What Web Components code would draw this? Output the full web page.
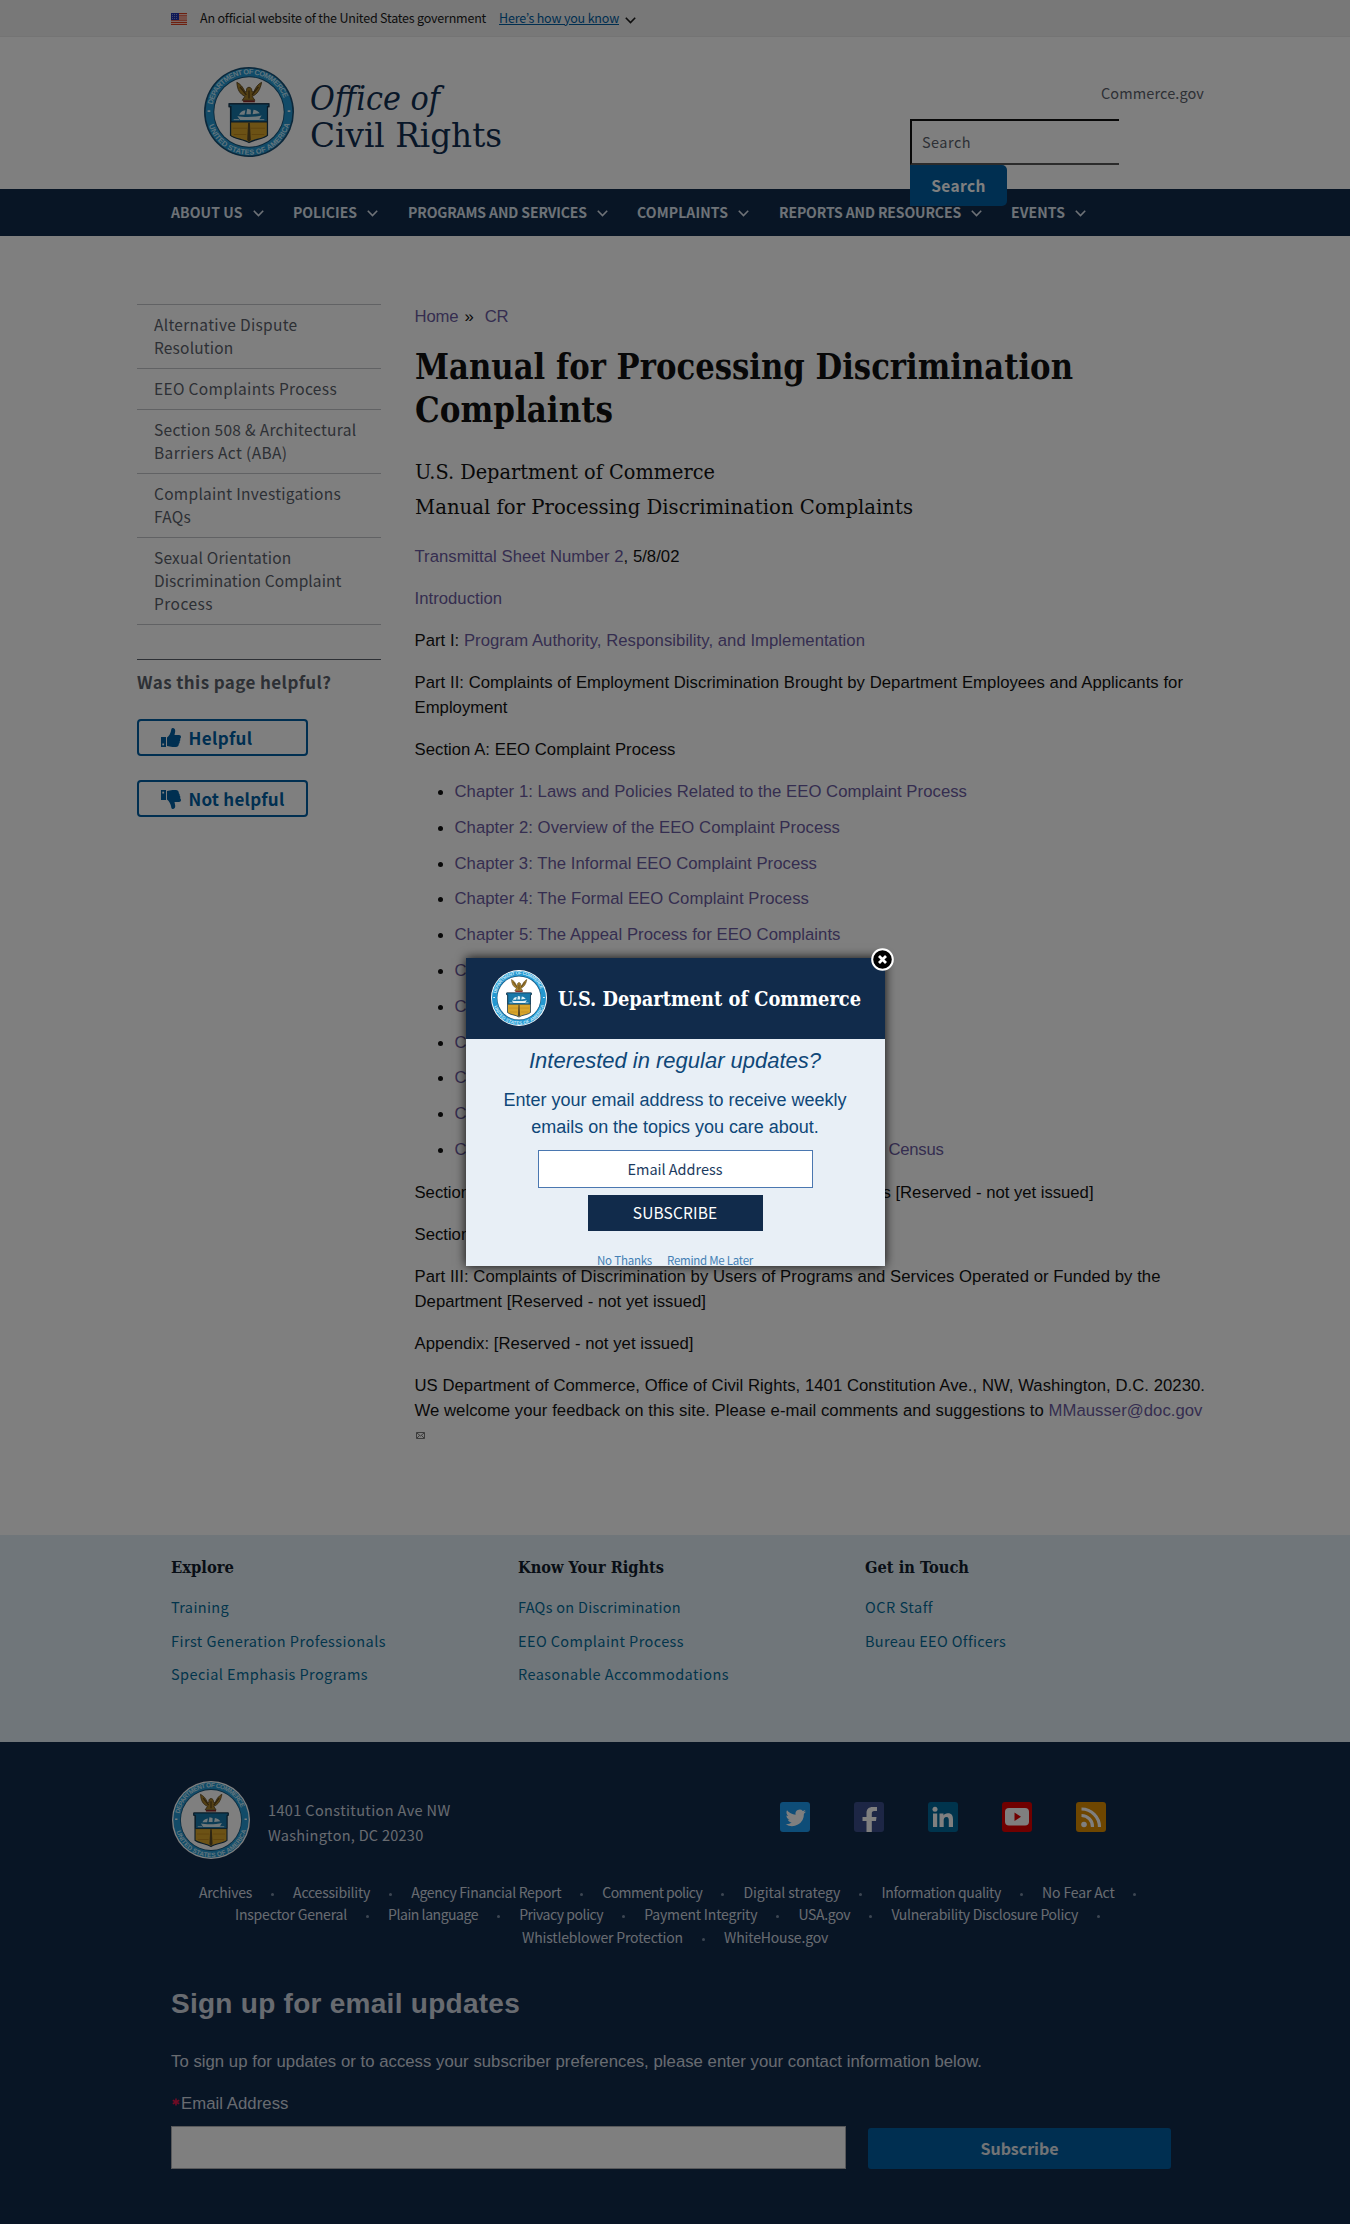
<!DOCTYPE html>
<html lang="en">
<head>
<meta charset="utf-8">
<title>Manual for Processing Discrimination Complaints</title>
<style>
html,body{margin:0;padding:0}
body{position:relative;width:1350px;height:2224px;overflow:hidden;background:#fff;color:#111;
--sans:"Noto Sans CJK JP","Noto Sans CJK SC",sans-serif;
--serif:"DejaVu Serif Condensed","DejaVu Serif",serif;
--arial:"Liberation Sans",Arial,sans-serif;
font-family:var(--arial);font-size:17px}
.cols{display:flex;height:1299px;box-sizing:border-box;padding:68px 0 0 137px}
</style>
</head>
<body>
<gov-banner></gov-banner>
<site-header></site-header>
<site-nav></site-nav>
<div class="cols">
<side-nav></side-nav>
<page-article></page-article>
</div>
<footer-columns></footer-columns>
<site-footer></site-footer>
<page-overlay><subscribe-popup></subscribe-popup></page-overlay>
<script>
function component(name, html){
  customElements.define(name, class extends HTMLElement{
    constructor(){ super(); this.attachShadow({mode:'open'}).innerHTML = html; }
  });
}
const t = (w, s, x='') => `<fit-text w="${w}" ${x}>${s}</fit-text>`;
const chevron = (c, w) => `<svg width="11" height="7" viewBox="0 0 11 7" fill="none" stroke="${c}" stroke-width="${w}"><path d="M.8 .8 5.5 5.5 10.2 .8"/></svg>`;

component('doc-seal', `<style>:host{display:block;flex:none}svg{display:block;width:100%;height:100%}text{font:bold 8.2px "Liberation Sans",sans-serif;fill:#c3e9fa}</style>
<svg viewBox="0 0 100 100">
<defs><path id="up" d="M9.2 53A41 41 0 1 1 90.8 53"/><path id="dn" d="M3.5 54A46.6 46.6 0 0 0 96.5 54"/></defs>
<circle cx="50" cy="50" r="50" fill="var(--rim,#174f74)"/><circle cx="50" cy="50" r="48.3" fill="#2497d0"/>
<circle cx="50" cy="50" r="39.6" fill="#145177"/><circle cx="50" cy="50" r="38.6" fill="#fff"/>
<text textLength="107"><textPath href="#up" startOffset="11">DEPARTMENT OF COMMERCE</textPath></text>
<text textLength="120"><textPath href="#dn" startOffset="11">UNITED STATES OF AMERICA</textPath></text>
<path d="M36.500 17c.5 8 3 13 9 15.500l-3 4.500h14l-3-4.500c5.500-2 9-7 10.500-15.500-4 2-7 6-8.500 10.500l-2.200 0c0-3-1-5-3.300-5s-3.300 2-2.500 5l-2 0c-2-5-5-8.500-9-10.500z" fill="#a8832b" stroke="#513b16" stroke-width=".9"/>
<path d="M40 22l7 9M60.500 22l-7 9M50 26v9" stroke="#5b4219" stroke-width="1.500"/><path d="M43.500 38.200h13" stroke="#8d2a26" stroke-width="2"/>
<path d="M28 41h44v3h-1.500v32c-4 4-15 4-20.500 8-6-4-16-4-20.500-8V44H28z" fill="#d9a52b" stroke="#14364f" stroke-width="1.400"/>
<path d="M28 41h44v3h-1.500v17H30V44H28z" fill="#1878aa" stroke="#14364f" stroke-width="1.200"/>
<path d="M37 54.500c6 1.500 19 1.500 27-.5l-3 5H40z" fill="#dff1f6"/><path d="M39 53c1.500-3 3-4.500 7-5l-1 5zM47 52.500l1-6 4 1v5zM54 52.500l1-5c3 .5 5 2 7 4z" fill="#dff1f6"/><path d="M33 58.500h6M61 58.500h6" stroke="#dff1f6" stroke-width="1"/>
<path d="M49 62h2l1 19-2 2-2-2z" fill="#5a4a26"/><path d="M32 68h16M52 68h16M33 75h14M53 75h14" stroke="#bb841c" stroke-width="1"/>
<path d="M4 49h3M93 49h3" stroke="#e8f6ff" stroke-width="2"/></svg>`);

component('gov-banner', `<style>:host{display:flex;height:37px;background:#f0f0f0;border-bottom:1px solid #e8e8e8;box-sizing:border-box;padding-left:171px;font:12.5px/36px var(--sans);color:#1b1b1b}
.flag{margin:13px 13px 0 0}.a{color:#005ea2;margin:0 6px 0 13px}.c{padding-top:1px}</style>
<svg class="flag" width="16" height="12" viewBox="0 0 16 12"><path fill="#fff" d="M0 0h16v12H0z"/><path stroke="#db3e1f" stroke-width="1.2" d="M0 .6h16M0 2.800h16M0 5h16M0 7.200h16M0 9.400h16M0 11.400h16"/><path fill="#1e33b1" d="M0 0h8v7H0z"/><path stroke="#8791cf" stroke-dasharray="1 1" d="M1 1.500h6M1 3.500h6M1 5.500h6"/></svg>
${t(286,'An official website of the United States government')}<span class="a">${t(120,"<u>Here’s how you know</u>")}</span><span class="c">${chevron('#1b1b1b',1.6)}</span>`);

component('site-header', `<style>:host{display:flex;justify-content:space-between;height:152px;box-sizing:border-box;padding:29px 146px 0 204px;position:relative;z-index:1}
.brand{display:flex;gap:16px}doc-seal{width:90px;height:90px;margin-top:.500px}
.name{font:34px/37px var(--serif);font-stretch:condensed;color:#112e51;padding-top:14px}.name div{height:37px}.i{font-style:italic}
.right{width:294px;font:14.5px/24px var(--sans);color:#5b616b}
.top{text-align:right;padding-top:15px;height:38px}
.in{width:209px;height:46px;box-sizing:border-box;border:solid #111;border-width:2px 0 2px 2px;border-bottom-color:#565656;padding:10px 0 0 10px;line-height:22px}
.b{width:97px;height:41px;background:#005ea2;border-radius:0 5px 5px 0;color:#fff;font-weight:700;font-size:15.5px;line-height:41px;text-align:center}</style>
<div class="brand"><doc-seal></doc-seal><div class="name"><div class="i">${t(130,'Office of','stretch')}</div><div>${t(192,'Civil Rights','stretch')}</div></div></div>
<div class="right"><div class="top">${t(103,'Commerce.gov')}</div><div class="in">${t(49,'Search')}</div><div class="b">${t(54.500,'Search')}</div></div>`);

const navItems=[['ABOUT US',71.500,10.500,29],['POLICIES',64,10,30],['PROGRAMS AND SERVICES',179,10,29],['COMPLAINTS',91,10,30],['REPORTS AND RESOURCES',182,10,29],['EVENTS',54,10,0]];
component('site-nav', `<style>:host{display:flex;height:47px;background:#112b4b;color:#dce4ef;font:bold 14px/47px var(--sans);padding-left:171px}
.g{display:flex;align-items:center}svg{display:block;margin-top:2px}</style>
${navItems.map(([s,w,a,b])=>`<div class="g" style="margin-right:${b}px;gap:${a}px">${t(w,s)}${chevron('#dce4ef',1.6)}</div>`).join('')}`);

const sideItems=[[['Alternative Dispute',143.500],['Resolution',79.500]],[['EEO Complaints Process',183]],[['Section 508 &amp; Architectural',202.500],['Barriers Act (ABA)',133.500]],[['Complaint Investigations',187],['FAQs',37]],[['Sexual Orientation',137.500],['Discrimination Complaint',187.500],['Process',59]]];
const thumb=(f)=>`<svg width="20" height="20" viewBox="0 0 20 20" fill="#005ea2" style="${f?'transform:scaleY(-1)':''}"><path d="M0 9h5v10H0z"/><path d="M6 18V9.500C8 8 9.500 5.500 10 3c.3-1.800.6-3 1.600-3 2 0 2.800 1.500 2.600 3.500L13.500 7H18c1.300 0 2 .9 2 2 0 .9-.4 1.500-.9 1.800.4.9.3 2-.5 2.600.3 1-.1 1.900-.8 2.300.2 1.900-.9 3.300-3 3.300h-3.300c-2 0-3.500-1-5.500-1z"/><path d="M1.300 15.500h1.800v1.800H1.300z" fill="#fff"/></svg>`;
component('side-nav', `<style>:host{display:block;width:244px;flex:none;color:#5b616b;font:15.500px/23px var(--sans)}
.item{border-top:1px solid #c2c4c8;padding:8px 0 8.900px 17px}.item div{height:23.100px}
.list{border-bottom:1px solid #c2c4c8}
.q{margin-top:34px;border-top:1px solid #5b616b;font-weight:700;font-size:17px;line-height:24px;padding-top:10px;height:49px}
.btn{width:171px;height:37px;box-sizing:border-box;border:2px solid #005ea2;border-radius:4px;margin-bottom:24px;display:flex;align-items:center;padding-left:22px;gap:7.500px;color:#005ea2;font-weight:700;font-size:17px;line-height:21px}</style>
<div class="list">${sideItems.map(i=>`<div class="item">${i.map(([s,w])=>`<div>${t(w,s)}</div>`).join('')}</div>`).join('')}</div>
<div class="q">${t(194.5,'Was this page helpful?')}</div>
<div class="btn">${thumb(0)}${t(64,'Helpful')}</div><div class="btn">${thumb(1)}${t(96,'Not helpful')}</div>`);

const chapters=[['Chapter 1: Laws and Policies Related to the EEO Complaint Process',512.500],['Chapter 2: Overview of the EEO Complaint Process',385.500],['Chapter 3: The Informal EEO Complaint Process',362.500],['Chapter 4: The Formal EEO Complaint Process',354.500],['Chapter 5: The Appeal Process for EEO Complaints',386],['Chapter 6',74],['Chapter 7',74],['Chapter 8',74],['Chapter 9',74],['Chapter 10',83],['Chapter 11: Complaints Arising within the U.S. Bureau of the Census',489]];
component('page-article', `<style>:host{display:block;padding-left:33.500px;width:800px;font:16.700px/25px var(--arial);color:#111}
a,.a{color:#6b5ba0}p{margin:0 0 17px}.l{height:25px}
.bc{display:flex;height:25px}
h1,h2{margin:0;font-family:var(--serif);font-stretch:condensed}
h1{font-size:34.500px;line-height:43px;margin-top:17px}h1 div{height:43px}
h2{font-weight:400;font-size:21px;line-height:35px;margin-top:23px;margin-bottom:19px}h2 div{height:35px}
ul{margin:0 0 19px;padding:0;list-style:none}li{height:35.800px;display:flex;align-items:flex-start;padding-left:23px}
li::before{content:"";width:5px;height:5px;border-radius:50%;background:#111;margin:11px 12px 0 0}li:last-child{height:24.500px}</style>
<div class="bc"><a>${t(44,'Home')}</a><span style="margin:0 11px 0 6px">»</span><a>${t(23.500,'CR')}</a></div>
<h1><div>${t(658,'Manual for Processing Discrimination','stretch')}</div><div>${t(198,'Complaints','stretch')}</div></h1>
<h2><div>${t(300,'U.S. Department of Commerce','stretch')}</div><div>${t(498,'Manual for Processing Discrimination Complaints','stretch')}</div></h2>
<p class="l">${t(265,'<a>Transmittal Sheet Number 2</a>, 5/8/02')}</p>
<p class="l">${t(87.500,'<a>Introduction</a>')}</p>
<p class="l">${t(450.500,'Part I: <a>Program Authority, Responsibility, and Implementation</a>')}</p>
<p class="l" style="margin:0">${t(768.500,'Part II: Complaints of Employment Discrimination Brought by Department Employees and Applicants for')}</p><p class="l">${t(93,'Employment')}</p>
<p class="l">${t(261,'Section A: EEO Complaint Process')}</p>
<ul>${chapters.map(([s,w])=>`<li><a>${t(w,s)}</a></li>`).join('')}</ul>
<p class="l">${t(679,'Section B: Class Complaints and Other Special Complaint Types [Reserved - not yet issued]')}</p>
<p class="l">Section C</p>
<p class="l" style="margin:0">${t(746,'Part III: Complaints of Discrimination by Users of Programs and Services Operated or Funded by the')}</p><p class="l">${t(291.500,'Department [Reserved - not yet issued]')}</p>
<p class="l">${t(279,'Appendix: [Reserved - not yet issued]')}</p>
<p class="l" style="margin:0">${t(790.500,'US Department of Commerce, Office of Civil Rights, 1401 Constitution Ave., NW, Washington, D.C. 20230.')}</p>
<p class="l" style="margin:0">${t(788,'We welcome your feedback on this site. Please e-mail comments and suggestions to <a>MMausser@doc.gov</a>')}</p>
<svg style="display:block;margin:9px 0 0 1px" width="9" height="7" viewBox="0 0 9 7" fill="none" stroke="#555" stroke-width=".8"><path d="M.5.5h8v6h-8zM1 1l3.500 3L8 1M1 6l2.500-2.500M8 6 5.500 3.500"/></svg>`);

const fcols=[['Explore',63,[['Training',58],['First Generation Professionals',215],['Special Emphasis Programs',197]]],['Know Your Rights',146,[['FAQs on Discrimination',163],['EEO Complaint Process',166],['Reasonable Accommodations',211]]],['Get in Touch',104,[['OCR Staff',68],['Bureau EEO Officers',141]]]];
component('footer-columns', `<style>:host{display:flex;height:207px;box-sizing:border-box;background:#e1edf4;padding:20.500px 0 0 171px}
.c{width:347px;font:14.500px/33.500px var(--sans);color:#046b99}.h{font:bold 16px/24px var(--serif);font-stretch:condensed;color:#111c2c}.c div{height:33.500px}.c .h{height:34.500px}</style>
${fcols.map(([h,w,l])=>`<div class="c"><div class="h">${t(w,h,'stretch')}</div>${l.map(([s,x])=>`<div>${t(x,s)}</div>`).join('')}</div>`).join('')}`);

const social={
'#1d9bf0':'<path fill="#fff" d="M26 9.500c-.8.400-1.600.6-2.400.7.900-.5 1.500-1.300 1.800-2.300-.8.5-1.700.8-2.600 1A4.200 4.200 0 0 0 15.600 12.700C12.100 12.500 9 10.900 7 8.300c-1.100 1.900-.6 4.300 1.300 5.600-.7 0-1.300-.2-1.900-.5 0 2 1.400 3.700 3.300 4.100-.6.200-1.300.2-1.900.1.500 1.700 2.100 2.900 3.900 2.900A8.300 8.300 0 0 1 5.600 22.200 11.900 11.900 0 0 0 23.900 11.700c.8-.6 1.500-1.300 2.100-2.200z"/>',
'#3b4d8a':'<path fill="#fff" d="M12.500 30V19h-4v-4h4V11c0-4 2.400-6 6-6H23v4h-2.700c-2 0-2.500 1-2.500 2.400V15h4.700l-.5 4H17.800v11z"/>',
'#00699b':'<path fill="#fff" d="M5 11.500h4.200V25H5zM11.500 11.500h4v1.900c.7-1.200 2.200-2.200 4.300-2.200 4.200 0 5.200 2.700 5.200 6.300V25h-4.200v-6.700c0-1.700-.3-3.400-2.300-3.400-2.100 0-2.800 1.500-2.800 3.400V25h-4.200z"/><circle cx="7" cy="7.300" r="2.500" fill="#fff"/>',
'#e00000':'<rect x="3" y="6" width="24" height="17.500" rx="4" fill="#fff"/><path fill="#e00000" d="M12.500 10.500v8.500l6.500-4.200z"/>',
'#dc8c00':'<circle cx="8" cy="22.500" r="2.800" fill="#fff"/><g fill="none" stroke="#fff" stroke-width="3.200"><path d="M5.500 13.500A11 11 0 0 1 16.500 25M5.500 7A18 18 0 0 1 23.500 25"/></g>'};
const linkRows=[[['Archives',53],['Accessibility',77],['Agency Financial Report',150],['Comment policy',100],['Digital strategy',97],['Information quality',119.500],['No Fear Act',72.500],['',0]],[['Inspector General',112],['Plain language',90],['Privacy policy',84],['Payment Integrity',113],['USA.gov',52],['Vulnerability Disclosure Policy',186.500],['',0]],[['Whistleblower Protection',161],['WhiteHouse.gov',104]]];
component('site-footer', `<style>:host{display:block;height:482px;box-sizing:border-box;background:#112b4b;color:#d0d7e0;padding:39px 171px 0;font:14.500px/25px var(--sans)}
.top{display:flex;height:78px}doc-seal{width:78px;height:78px;margin:0 18px 0 1px;--rim:#fff}
.ad{padding-top:16px;width:342px}.ad div{height:25px}.soc{display:flex;gap:44px;padding:21px 0 0 170px}.soc svg{display:block;border-radius:3px}
.links{margin-top:21.500px;font-size:14px;line-height:22.500px}.r{display:flex;height:22.500px}
.r i{width:3px;height:3px;border-radius:2px;background:#7a8ca5;margin:12px 19.500px 0 18.600px}
h2{margin:38.500px 0 0;font:bold 28px/34px var(--arial);height:62px}.p{font:16.700px/25px var(--arial);height:42px;display:flex}
.p+.p{height:35.500px}
.f{display:flex;gap:22px}.in{width:675px;height:43px;box-sizing:border-box;border:1px solid #aeb0b5;background:#fff}
.b{width:303px;height:41px;margin-top:2px;background:#005ea2;color:#e4e8ed;font:bold 16px/41px var(--sans);border-radius:3px;text-align:center}</style>
<div class="top"><doc-seal></doc-seal><div class="ad"><div>${t(182.500,'1401 Constitution Ave NW')}</div><div>${t(155.500,'Washington, DC 20230')}</div></div>
<div class="soc">${Object.entries(social).map(([c,p])=>`<svg width="30" height="30" viewBox="0 0 30 30"><path fill="${c}" d="M0 0h30v30H0z"/>${p}</svg>`).join('')}</div></div>
<div class="links">${linkRows.map((r,i)=>`<div class="r" style="padding-left:${[28,64,351][i]}px">${r.map(([s,w])=>s?t(w,s):'').join('<i></i>')}</div>`).join('')}</div>
<h2>${t(349,'Sign up for email updates')}</h2>
<div class="p">${t(811,'To sign up for updates or to access your subscriber preferences, please enter your contact information below.')}</div>
<div class="p"><svg style="margin:7px 1px 0 1px" width="8" height="8" viewBox="0 0 8 8" stroke="#e0184a" stroke-width="1.600"><path d="M4 .5v7M.8 2.200l6.400 3.600M7.200 2.200.8 5.800"/></svg>${t(107.500,'Email Address')}</div>
<div class="f"><div class="in"></div><div class="b">${t(78,'Subscribe')}</div></div>`);

component('page-overlay', `<style>:host{position:absolute;inset:0;background:rgba(0,0,0,.5);z-index:5;display:flex;justify-content:center;align-items:flex-start;padding-top:958px}</style><slot></slot>`);

component('subscribe-popup', `<style>:host{display:block;position:relative;width:419px;height:308px;background:#e8eff6;box-shadow:0 0 10px rgba(0,0,0,.9);color:#0f4778;text-align:center}
.h{height:81px;background:#112b4b;display:flex;padding-left:25px;box-sizing:border-box;color:#fff;gap:11px}doc-seal{width:56px;height:56px;margin-top:12px;--rim:#fff}
.tt{font:bold 20.500px/28px var(--serif);font-stretch:condensed;padding-top:27px}
.i{font:italic 22px/30px var(--arial);padding-top:7px;height:30px}
.e{font:18px/27px var(--arial)}.e div{height:27px}.ee{padding-top:11px;height:62px}
.in{width:275px;height:38px;box-sizing:border-box;border:1px solid #4a77b0;background:#fff;margin:1px auto 7px;font:14.500px/36px var(--sans);color:#1c3b60}
.b{width:175px;height:36px;background:#112b4b;color:#fff;margin:0 auto;font:15.500px/35px var(--sans)}
.n{display:flex;justify-content:center;gap:15px;height:13px;margin-top:23px;font:11.500px/13px var(--sans);color:#4480b4}
.x{position:absolute;right:-9px;top:-10px}</style>
<div class="h"><doc-seal></doc-seal><div class="tt">${t(303,'U.S. Department of Commerce','stretch')}</div></div>
<div class="i">${t(292,'Interested in regular updates?')}</div>
<div class="e ee"><div>${t(343,'Enter your email address to receive weekly')}</div><div>${t(287.500,'emails on the topics you care about.')}</div></div>
<div class="in">${t(95,'Email Address')}</div><div class="b">${t(84.500,'SUBSCRIBE')}</div>
<div class="n">${t(55,'No Thanks')}${t(86,'Remind Me Later')}</div>
<svg class="x" width="23" height="23" viewBox="0 0 23 23"><circle cx="11.500" cy="11.500" r="10.300" fill="#000" stroke="#fff" stroke-width="2"/><path d="m8 8 7 7M15 8l-7 7" stroke="#fff" stroke-width="2.800"/></svg>`);

/* A single line of text set to a given measure, by tracking or by horizontal scaling. */
customElements.define('fit-text', class extends HTMLElement{
  constructor(){ super(); this.attachShadow({mode:'open'}).innerHTML='<style>:host{display:inline-block;white-space:nowrap;vertical-align:top}span{display:inline-block;white-space:nowrap;transform-origin:0 50%;vertical-align:top}</style><span><slot></slot></span>'; }
  connectedCallback(){
    const s=this.shadowRoot.querySelector('span'), w=+this.getAttribute('w'), n=s.getBoundingClientRect().width;
    if(!n) return;
    if(this.hasAttribute('stretch')) s.style.transform=`scaleX(${w/n})`;
    else s.style.letterSpacing=(w-n)/this.textContent.length+'px';
    this.style.width=w+'px';
  }
});
</script>
</body>
</html>
